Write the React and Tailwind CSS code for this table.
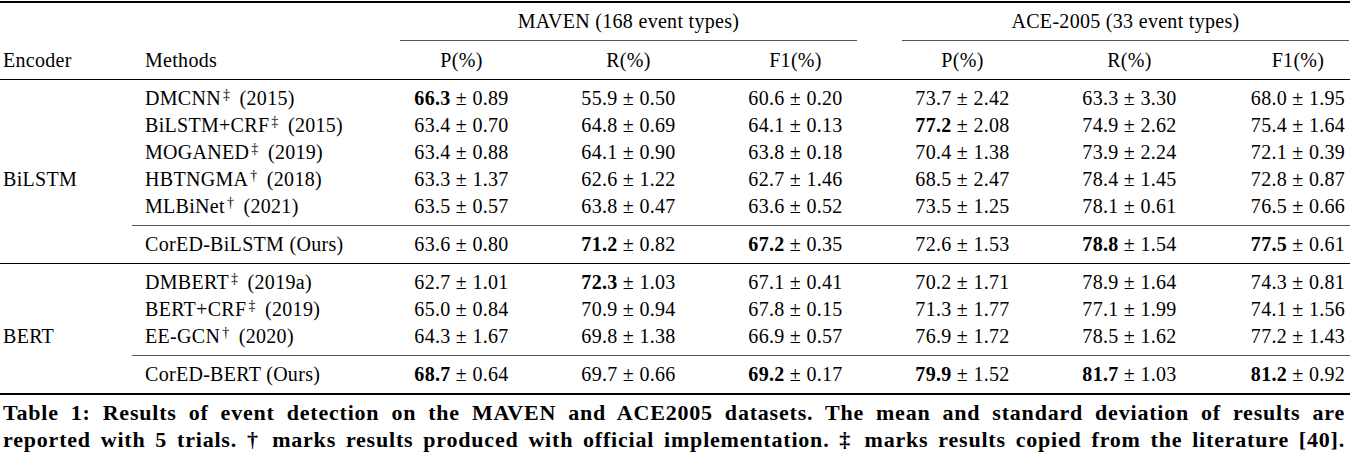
import React from "react"

const cols = "grid grid-cols-[132px_246px_167px_167px_167px_167px_167px_136px]"

// each score: "value|sd" with a leading * when bold
const bilstm = [
  { name: "DMCNN", mark: "‡", year: "(2015)", s: ["*66.3|0.89", "55.9|0.50", "60.6|0.20", "73.7|2.42", "63.3|3.30", "68.0|1.95"] },
  { name: "BiLSTM+CRF", mark: "‡", year: "(2015)", s: ["63.4|0.70", "64.8|0.69", "64.1|0.13", "*77.2|2.08", "74.9|2.62", "75.4|1.64"] },
  { name: "MOGANED", mark: "‡", year: "(2019)", s: ["63.4|0.88", "64.1|0.90", "63.8|0.18", "70.4|1.38", "73.9|2.24", "72.1|0.39"] },
  { name: "HBTNGMA", mark: "†", year: "(2018)", s: ["63.3|1.37", "62.6|1.22", "62.7|1.46", "68.5|2.47", "78.4|1.45", "72.8|0.87"], enc: "BiLSTM" },
  { name: "MLBiNet", mark: "†", year: "(2021)", s: ["63.5|0.57", "63.8|0.47", "63.6|0.52", "73.5|1.25", "78.1|0.61", "76.5|0.66"] },
]
const bilstmOurs = { name: "CorED-BiLSTM (Ours)", s: ["63.6|0.80", "*71.2|0.82", "*67.2|0.35", "72.6|1.53", "*78.8|1.54", "*77.5|0.61"] }

const bert = [
  { name: "DMBERT", mark: "‡", year: "(2019a)", s: ["62.7|1.01", "*72.3|1.03", "67.1|0.41", "70.2|1.71", "78.9|1.64", "74.3|0.81"] },
  { name: "BERT+CRF", mark: "‡", year: "(2019)", s: ["65.0|0.84", "70.9|0.94", "67.8|0.15", "71.3|1.77", "77.1|1.99", "74.1|1.56"] },
  { name: "EE-GCN", mark: "†", year: "(2020)", s: ["64.3|1.67", "69.8|1.38", "66.9|0.57", "76.9|1.72", "78.5|1.62", "77.2|1.43"], enc: "BERT" },
]
const bertOurs = { name: "CorED-BERT (Ours)", s: ["*68.7|0.64", "69.7|0.66", "*69.2|0.17", "*79.9|1.52", "*81.7|1.03", "*81.2|0.92"] }

function Score({ v, last }) {
  const bold = v.startsWith("*")
  const [val, sd] = v.replace("*", "").split("|")
  return (
    <div className={last ? "text-center pl-[34px]" : "text-center"}>
      <span className={bold ? "font-bold" : ""}>{val}</span> ± {sd}
    </div>
  )
}

function Row({ r }) {
  return (
    <div className={`${cols} h-[27px] leading-[27px]`}>
      <div className="pl-[3px]">{r.enc || ""}</div>
      <div className="pl-[13px] whitespace-nowrap">
        {r.name}
        {r.mark && <span className="text-[14px] relative -top-[6px] ml-[2px] mr-[4px]">{r.mark}</span>}
        {r.year && <> {r.year}</>}
      </div>
      {r.s.map((v, i) => <Score key={i} v={v} last={i === 5} />)}
    </div>
  )
}

export default function App() {
  return (
    <div className="w-[1350px] h-[457px] bg-white text-black font-['Liberation_Serif',serif] text-[20px] tracking-[0.3px] overflow-hidden">
      <div className="pt-px">
        <div className="h-[2px] bg-black" />

        {/* group header */}
        <div className={`${cols} h-[38px]`}>
          <div />
          <div />
          <div className="col-span-3 flex flex-col pl-[22px] pr-[22px]">
            <div className="h-[37px] leading-[37px] text-center">MAVEN (168 event types)</div>
            <div className="h-px bg-[#555]" />
          </div>
          <div className="col-span-3 flex flex-col pl-[23px]">
            <div className="h-[37px] leading-[37px] text-center">ACE-2005 (33 event types)</div>
            <div className="h-px bg-[#555]" />
          </div>
        </div>

        <div className={`${cols} h-[38px] leading-[38px]`}>
          <div className="pl-[3px]">Encoder</div>
          <div className="pl-[13px]">Methods</div>
          <div className="text-center">P(%)</div>
          <div className="text-center">R(%)</div>
          <div className="text-center">F1(%)</div>
          <div className="text-center">P(%)</div>
          <div className="text-center">R(%)</div>
          <div className="text-center pl-[34px]">F1(%)</div>
        </div>
        <div className="h-px bg-black" />

        <div className="py-[5px]">
          {bilstm.map((r, i) => <Row key={i} r={r} />)}
        </div>
        <div className="ml-[132px] h-px bg-[#555]" />
        <div className="py-[5px]">
          <Row r={bilstmOurs} />
        </div>
        <div className="h-px bg-black" />

        <div className="py-[5px]">
          {bert.map((r, i) => <Row key={i} r={r} />)}
        </div>
        <div className="ml-[132px] h-px bg-[#555]" />
        <div className="py-[5px]">
          <Row r={bertOurs} />
        </div>
        <div className="h-[2px] bg-black" />

        <div className="mt-[4px] pl-[3px] pr-[5px] font-bold text-[22px] tracking-[0.8px] leading-[27px]">
          <div className="text-justify [text-align-last:justify] whitespace-nowrap">
            Table 1: Results of event detection on the MAVEN and ACE2005 datasets. The mean and standard deviation of results are
          </div>
          <div className="text-justify [text-align-last:justify] whitespace-nowrap">
            reported with 5 trials. † marks results produced with official implementation. ‡ marks results copied from the literature [40].
          </div>
        </div>
      </div>
    </div>
  )
}
